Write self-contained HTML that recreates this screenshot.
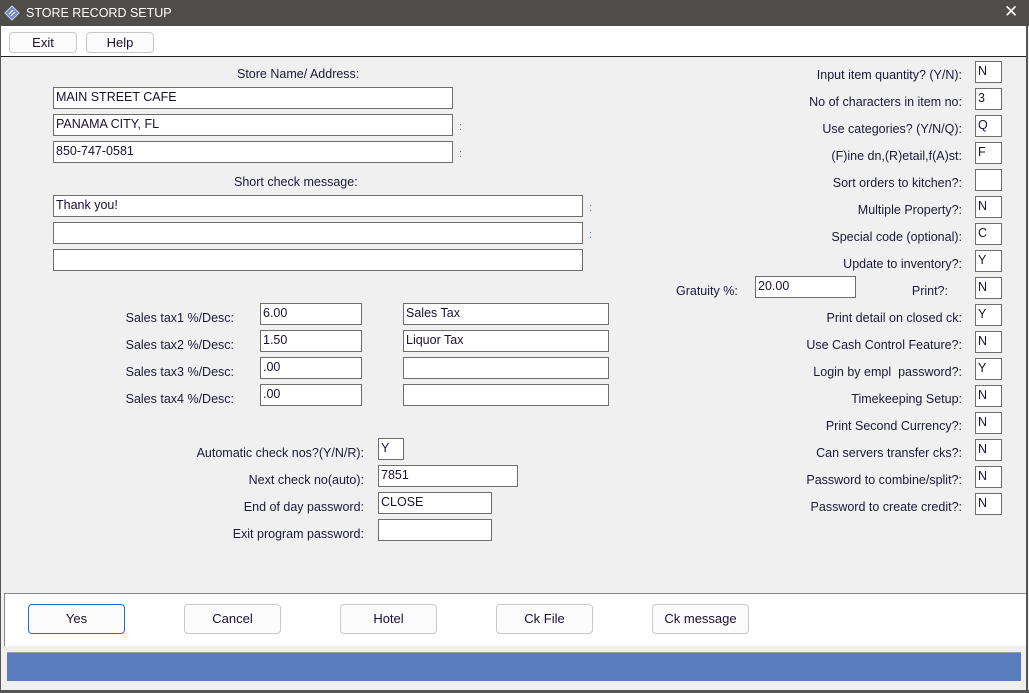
<!DOCTYPE html>
<html><head><style>
*{margin:0;padding:0;box-sizing:border-box}
body{width:1029px;height:693px;background:#f0f0f0;font-family:"Liberation Sans",Arial,sans-serif;font-size:12.5px;color:#1a1a3a;position:relative;overflow:hidden}
.a{position:absolute}
.in{position:absolute;background:#fff;border:1px solid #6e6e6e;height:22px;padding:1px 2px;font-size:12.5px;line-height:17px;color:#1a1030}
.lr{position:absolute;text-align:right;white-space:nowrap}
.btn{position:absolute;background:#fbfbfb;border:1px solid #c8c8c8;border-radius:4px;text-align:center;line-height:28px;font-size:13px;color:#1a1030;height:30px;width:97px}
.c{position:absolute;color:#3a7bbf;font-size:11px}
</style></head><body>
<div class="a" style="left:0;top:0;width:1029px;height:26px;background:#4e4d49;color:#fff;font-size:12.5px;line-height:26px;padding-left:26px">STORE RECORD SETUP</div>
<svg class="a" style="left:4px;top:5px" width="16" height="16" viewBox="0 0 16 16"><path d="M8 1L15 8L8 15L1 8Z" fill="#6f86c8" stroke="#c8d4f0"/><path d="M5 9L9 5M7 11L11 7" stroke="#fff" stroke-width="1.2"/></svg>
<div class="a" style="left:1004px;top:2px;color:#fff;font-size:17px">✕</div>
<div class="a" style="left:0;top:26px;width:1027px;height:31px;background:#fff;border-bottom:1px solid #222"></div>
<div class="btn" style="left:9px;top:32px;width:68px;height:21px;line-height:19px">Exit</div>
<div class="btn" style="left:86px;top:32px;width:68px;height:21px;line-height:19px">Help</div>
<div class="a" style="left:1026px;top:26px;width:2px;height:667px;background:#555"></div>

<div class="a" style="left:237px;top:67px">Store Name/ Address:</div>
<div class="in" style="left:53px;top:87px;width:400px">MAIN STREET CAFE</div>
<div class="in" style="left:53px;top:114px;width:400px">PANAMA CITY, FL</div>
<div class="in" style="left:53px;top:141px;width:400px">850-747-0581</div>
<div class="c" style="left:459px;top:121px">:</div><div class="c" style="left:459px;top:148px">:</div>
<div class="a" style="left:234px;top:175px">Short check message:</div>
<div class="in" style="left:53px;top:195px;width:530px">Thank you!</div>
<div class="in" style="left:53px;top:222px;width:530px"></div>
<div class="in" style="left:53px;top:249px;width:530px"></div>
<div class="c" style="left:589px;top:202px">:</div><div class="c" style="left:589px;top:229px">:</div>

<div class="lr" style="right:795px;top:311px">Sales tax1 %/Desc:</div>
<div class="lr" style="right:795px;top:338px">Sales tax2 %/Desc:</div>
<div class="lr" style="right:795px;top:365px">Sales tax3 %/Desc:</div>
<div class="lr" style="right:795px;top:392px">Sales tax4 %/Desc:</div>
<div class="in" style="left:260px;top:303px;width:102px">6.00</div>
<div class="in" style="left:260px;top:330px;width:102px">1.50</div>
<div class="in" style="left:260px;top:357px;width:102px">.00</div>
<div class="in" style="left:260px;top:384px;width:102px">.00</div>
<div class="in" style="left:403px;top:303px;width:206px">Sales Tax</div>
<div class="in" style="left:403px;top:330px;width:206px">Liquor Tax</div>
<div class="in" style="left:403px;top:357px;width:206px"></div>
<div class="in" style="left:403px;top:384px;width:206px"></div>

<div class="lr" style="right:665px;top:446px">Automatic check nos?(Y/N/R):</div>
<div class="lr" style="right:665px;top:473px">Next check no(auto):</div>
<div class="lr" style="right:665px;top:500px">End of day password:</div>
<div class="lr" style="right:665px;top:527px">Exit program password:</div>
<div class="in" style="left:378px;top:438px;width:26px">Y</div>
<div class="in" style="left:378px;top:465px;width:140px">7851</div>
<div class="in" style="left:378px;top:492px;width:114px">CLOSE</div>
<div class="in" style="left:378px;top:519px;width:114px"></div>

<div class="a" style="left:676px;top:284px">Gratuity %:</div>
<div class="in" style="left:755px;top:276px;width:101px">20.00</div>

<div class="lr" style="right:67px;top:68px">Input item quantity? (Y/N):</div>
<div class="lr" style="right:67px;top:95px">No of characters in item no:</div>
<div class="lr" style="right:67px;top:122px">Use categories? (Y/N/Q):</div>
<div class="lr" style="right:67px;top:149px">(F)ine dn,(R)etail,f(A)st:</div>
<div class="lr" style="right:67px;top:176px">Sort orders to kitchen?:</div>
<div class="lr" style="right:67px;top:203px">Multiple Property?:</div>
<div class="lr" style="right:67px;top:230px">Special code (optional):</div>
<div class="lr" style="right:67px;top:257px">Update to inventory?:</div>
<div class="lr" style="right:81px;top:284px">Print?:</div>
<div class="lr" style="right:67px;top:311px">Print detail on closed ck:</div>
<div class="lr" style="right:67px;top:338px">Use Cash Control Feature?:</div>
<div class="lr" style="right:67px;top:365px">Login by empl&nbsp; password?:</div>
<div class="lr" style="right:67px;top:392px">Timekeeping Setup:</div>
<div class="lr" style="right:67px;top:419px">Print Second Currency?:</div>
<div class="lr" style="right:67px;top:446px">Can servers transfer cks?:</div>
<div class="lr" style="right:67px;top:473px">Password to combine/split?:</div>
<div class="lr" style="right:67px;top:500px">Password to create credit?:</div>
<div class="in" style="left:975px;top:61px;width:27px">N</div>
<div class="in" style="left:975px;top:88px;width:27px">3</div>
<div class="in" style="left:975px;top:115px;width:27px">Q</div>
<div class="in" style="left:975px;top:142px;width:27px">F</div>
<div class="in" style="left:975px;top:169px;width:27px"></div>
<div class="in" style="left:975px;top:196px;width:27px">N</div>
<div class="in" style="left:975px;top:223px;width:27px">C</div>
<div class="in" style="left:975px;top:250px;width:27px">Y</div>
<div class="in" style="left:975px;top:277px;width:27px">N</div>
<div class="in" style="left:975px;top:304px;width:27px">Y</div>
<div class="in" style="left:975px;top:331px;width:27px">N</div>
<div class="in" style="left:975px;top:358px;width:27px">Y</div>
<div class="in" style="left:975px;top:385px;width:27px">N</div>
<div class="in" style="left:975px;top:412px;width:27px">N</div>
<div class="in" style="left:975px;top:439px;width:27px">N</div>
<div class="in" style="left:975px;top:466px;width:27px">N</div>
<div class="in" style="left:975px;top:493px;width:27px">N</div>

<div class="a" style="left:4px;top:593px;width:1022px;height:53px;background:#fff;border-top:1px solid #888;border-left:1px solid #888"></div>
<div class="btn" style="left:28px;top:604px;border:1px solid #1a6fd0">Yes</div>
<div class="btn" style="left:184px;top:604px">Cancel</div>
<div class="btn" style="left:340px;top:604px">Hotel</div>
<div class="btn" style="left:496px;top:604px">Ck File</div>
<div class="btn" style="left:652px;top:604px">Ck message</div>
<div class="a" style="left:7px;top:652px;width:1014px;height:29px;background:#5a7bbc;border-top:1px solid #999"></div>
<div class="a" style="left:0;top:690px;width:1029px;height:3px;background:#555"></div>
<div class="a" style="left:0;top:26px;width:1px;height:667px;background:#555"></div>
</body></html>
